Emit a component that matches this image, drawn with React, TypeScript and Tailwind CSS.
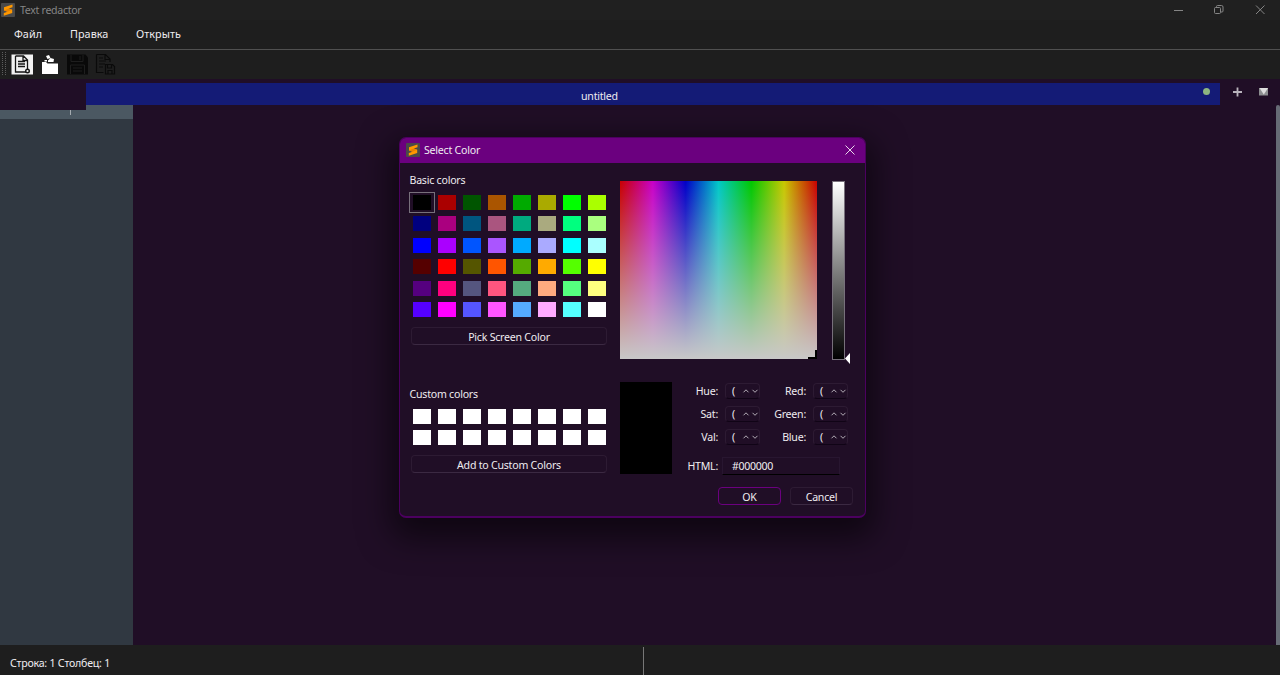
import { ReactNode } from "react"

const basicColors = [
  "#000000", "#aa0000", "#005500", "#aa5500", "#00aa00", "#aaaa00", "#00ff00", "#aaff00",
  "#00007f", "#aa007f", "#00557f", "#aa557f", "#00aa7f", "#aaaa7f", "#00ff7f", "#aaff7f",
  "#0000ff", "#aa00ff", "#0055ff", "#aa55ff", "#00aaff", "#aaaaff", "#00ffff", "#aaffff",
  "#550000", "#ff0000", "#555500", "#ff5500", "#55aa00", "#ffaa00", "#55ff00", "#ffff00",
  "#55007f", "#ff007f", "#55557f", "#ff557f", "#55aa7f", "#ffaa7f", "#55ff7f", "#ffff7f",
  "#5500ff", "#ff00ff", "#5555ff", "#ff55ff", "#55aaff", "#ffaaff", "#55ffff", "#ffffff",
]
const customColors = Array(16).fill("#ffffff")

const Logo = () => (
  <svg width="14" height="14" viewBox="0 0 14 14" className="shrink-0">
    <rect width="14" height="14" rx="1" fill="#4a4a4a" />
    <path d="M11.5 1.500 3 4.300v3.200l3.500 1.200L2.800 10v2.800l8.400-2.700V6.800L7.700 5.600l3.800-1.300z" fill="#ff9800" />
    <path d="M3 7.500 7.700 5.600 11.200 6.800 6.500 8.700z" fill="#e88300" />
  </svg>
)

const Swatches = ({ colors, selected }: { colors: string[]; selected?: number }) => (
  <div className="ml-px grid w-[200px] grid-cols-8 auto-rows-[21.4px]">
    {colors.map((c, i) => (
      <div key={i} className={`flex h-[21px] items-center pl-[3px] ${i === selected ? "-ml-px w-[26px] border border-[#77707b]" : "w-[25px]"}`}>
        <div className="h-[15px] w-[18px] shrink-0" style={{ backgroundColor: c }} />
      </div>
    ))}
  </div>
)

const Button = ({ children, className }: { children: ReactNode; className: string }) => (
  <button className={`flex items-center justify-center rounded-[4px] border ${className}`}>{children}</button>
)

const SpinBox = ({ label }: { label: string }) => (
  <div className="flex h-[23px] items-center">
    <span className="w-[46px] pt-px text-right">{label}</span>
    <div className="ml-[7px] flex h-[16px] w-[35px] items-center rounded-[4px] border border-[#2d1b33] border-b-[#100416] pl-[6px]">
      <span className="w-[5px] pt-px">(</span>
      <svg width="18" height="6" viewBox="0 0 18 6" className="ml-[7px] shrink-0" fill="none" stroke="#b5aeb8">
        <path d="M1.500 4.300 4 1.800l2.500 2.500M10.500 1.800 13 4.300l2.500-2.500" />
      </svg>
    </div>
  </div>
)

const TitleBar = () => (
  <div className="flex h-[20px] items-center justify-between bg-[#202020] pl-[1px] text-[#858585]">
    <div className="flex items-center">
      <Logo />
      <span className="ml-[5px] tracking-[-0.310px]">Text redactor</span>
    </div>
    <svg width="110" height="20" viewBox="0 0 110 20" fill="none" stroke="#858585">
      <path d="M4 10.500h9M86 5.500l8.500 8.500M94.500 5.500l-8.500 8.500" />
      <rect x="44.500" y="7.500" width="6" height="6" rx="1" />
      <path d="M46.500 7V6.500a1 1 0 0 1 1-1h4a1.500 1.500 0 0 1 1.500 1.500v4a1 1 0 0 1-1 1h-1" />
    </svg>
  </div>
)

const Toolbar = () => (
  <div className="flex h-[29px] items-center bg-[#1e1e1e]">
    <svg width="122" height="29" viewBox="0 0 122 29" fill="none">
      <path d="M2.500 2v24M5.500 2v24" stroke="#5c5c5c" strokeDasharray="1 1" />
      <rect x="11.500" y="4.500" width="21.500" height="20" fill="#f2f2f2" />
      <path d="M15.500 6h8l4 4v9M15.500 6v16H26M23 6v4.500h4.500M18 11.500h7M18 14h7M18 16.500h7" stroke="#151515" strokeWidth="1.300" />
      <circle cx="27.500" cy="21" r="1.800" stroke="#151515" strokeWidth="1.400" />
      <path d="M42 12h4l1.500 1.500H58V24H42z" fill="#fff" />
      <path d="M44.500 10h2.500v1.500h-2.500zM46 6l3-1 1.500 3-3 1zM50.500 8l3.500 1-.500 3h-5.500L48 10.500z" fill="#fff" />
      <path d="M67 4.500h18.500l2.500 3v17H67z" fill="#090909" />
      <path d="M71 5v6.500h12V5M70.500 24v-9h14v9M73 18h9M73 21h9M80 6v4" stroke="#1e1e1e" />
      <path d="M96.500 4.500h9l4.500 4.500v3M96.500 4.500v18h7M105 5v4.500h5M99 8h4M99 11h7M99 14h6M99 17h4M105.500 14.500h7l2 2v7.500h-9zM107.500 15v3h4v-3M108 24v-3.500h4V24" stroke="#0a0a0a" strokeWidth="1.200" />
    </svg>
  </div>
)

const TabBar = () => (
  <div className="flex h-[25px] bg-[#200e26] pt-[3px]">
    <div className="ml-[86px] flex h-[22px] w-[1134px] items-center bg-[#141b76]">
      <span className="ml-[495px] mt-[4px] leading-none">untitled</span>
      <span className="mb-[5px] ml-auto mr-[10.500px] size-[7px] rounded-full bg-[#8db580]" />
    </div>
    <svg width="60" height="20" viewBox="0 0 60 20">
      <path d="M17.500 4.500v9M13 9h9" stroke="#b9b3bc" strokeWidth="1.800" />
      <path d="M39 5h9v7.500h-9z" fill="#8c8e90" />
      <path d="M39.500 5h8.500l-4.200 6.500z" fill="#dedede" />
    </svg>
  </div>
)

const Editor = () => (
  <div className="flex h-[540px] bg-[#200e26]">
    <div className="w-[133.400px] bg-[#303841]">
      <div className="flex h-[14px] bg-[#4b5862]">
        <div className="h-[5px] w-[86px] bg-[#200e26]">
          <div className="ml-[69.500px] h-[5px] w-px translate-y-[5px] bg-[#a4abb0]" />
        </div>
      </div>
    </div>
    <div className="ml-auto w-[4px] rounded-t-[2px] bg-[#666b75]" />
  </div>
)

const StatusBar = () => (
  <div className="flex h-[30px] items-center bg-[#1e1e1e]">
    <span className="w-[643px] pl-[10px] pt-[5px]">Строка: 1 Столбец: 1</span>
    <div className="mt-[2px] h-[28px] w-px bg-[#777]" />
  </div>
)

const ColorDialog = () => (
  <div className="absolute left-[399px] top-[137px] h-[381px] w-[467px] overflow-hidden rounded-[7px] border border-b-2 border-[#4c0060] bg-[#200e26] shadow-[0_12px_32px_8px_rgba(0,0,0,0.55)]">
    <div className="flex h-[25px] items-center bg-[#6b007f] pb-[2px] pl-[6px]">
      <Logo />
      <span className="ml-[4px]">Select Color</span>
      <svg width="10" height="10" viewBox="0 0 10 10" className="ml-auto mr-[10px]" stroke="#e8d8eb">
        <path d="M.500.500l9 9M9.500.500l-9 9" />
      </svg>
    </div>
    <div className="flex">
      <div className="w-[220px] pl-[9px]">
        <p className="mt-[9px] h-[17px] pl-[0.500px] leading-[17px]">Basic colors</p>
        <div className="mt-[3px]">
          <Swatches colors={basicColors} selected={0} />
        </div>
        <Button className="ml-[2px] mt-[6.600px] h-[18px] w-[196px] border-[#2d1b33] border-b-[#3b2942] pt-[2px]">Pick Screen Color</Button>
        <p className="mt-[41px] h-[17px] pl-[0.500px] leading-[17px]">Custom colors</p>
        <div className="mt-[3px]">
          <Swatches colors={customColors} />
        </div>
        <Button className="ml-[2px] mt-[6.200px] h-[18px] w-[196px] border-[#2d1b33] border-b-[#3b2942] pt-[2px]">Add to Custom Colors</Button>
      </div>

      <div className="w-[245px] pt-[18px]">
        <div className="flex">
          <div className="flex h-[178px] w-[197px] items-end justify-end bg-[linear-gradient(to_bottom,transparent,#c8c8c8),linear-gradient(to_right,#c80000,#c800c8,#0000c8,#00c8c8,#00c800,#c8c800,#c80000)]">
            <div className="h-[9px] w-[9px] border-b-2 border-r-2 border-black" />
          </div>
          <div className="ml-[15px] h-[179px] w-[13px] border border-[#77707b] bg-[linear-gradient(to_bottom,#fff,#000)]" />
          <svg width="6" height="11" viewBox="0 0 6 11" className="mt-[171.500px]">
            <path d="M5 0v11L0 5.500z" fill="#fff" />
          </svg>
        </div>
        <div className="mt-[18px] flex">
          <div className="h-[92px] w-[52px] bg-black" />
          <div className="-mt-[2.500px]">
            <div className="flex">
              <div>
                <SpinBox label="Hue:" />
                <SpinBox label="Sat:" />
                <SpinBox label="Val:" />
              </div>
              <div>
                <SpinBox label="Red:" />
                <SpinBox label="Green:" />
                <SpinBox label="Blue:" />
              </div>
            </div>
            <div className="mt-[8px] flex h-[19px] items-center">
              <span className="w-[46px] pt-px text-right">HTML:</span>
              <div className="ml-[4px] flex h-[18px] w-[118px] items-center border border-[#281630] border-b-black pl-[9px] pt-px tracking-[-0.300px]">#000000</div>
            </div>
          </div>
        </div>
        <div className="ml-[98px] mt-[12px] flex gap-[9px]">
          <Button className="h-[18px] w-[63px] border-[#6b007f] pt-px">OK</Button>
          <Button className="h-[18px] w-[63px] border-[#2d1b33] border-b-[#3b2942] pt-px">Cancel</Button>
        </div>
      </div>
    </div>
  </div>
)

export default function App() {
  return (
    <div className="relative h-[675px] w-[1280px] overflow-hidden whitespace-nowrap bg-[#1e1e1e] font-['Noto_Sans','Open_Sans',sans-serif] text-[10.6px] leading-[14px] tracking-[-0.23px] text-[#efecf0]">
      <TitleBar />
      <div className="flex h-[30px] items-center border-b border-[#505050] pb-[2px] text-[10.8px] tracking-[0.050px]">
        <span className="ml-[14px] w-[56px]">Файл</span>
        <span className="w-[66px]">Правка</span>
        <span>Открыть</span>
      </div>
      <Toolbar />
      <div className="h-px bg-[#200e26]" />
      <TabBar />
      <Editor />
      <StatusBar />
      <ColorDialog />
    </div>
  )
}
